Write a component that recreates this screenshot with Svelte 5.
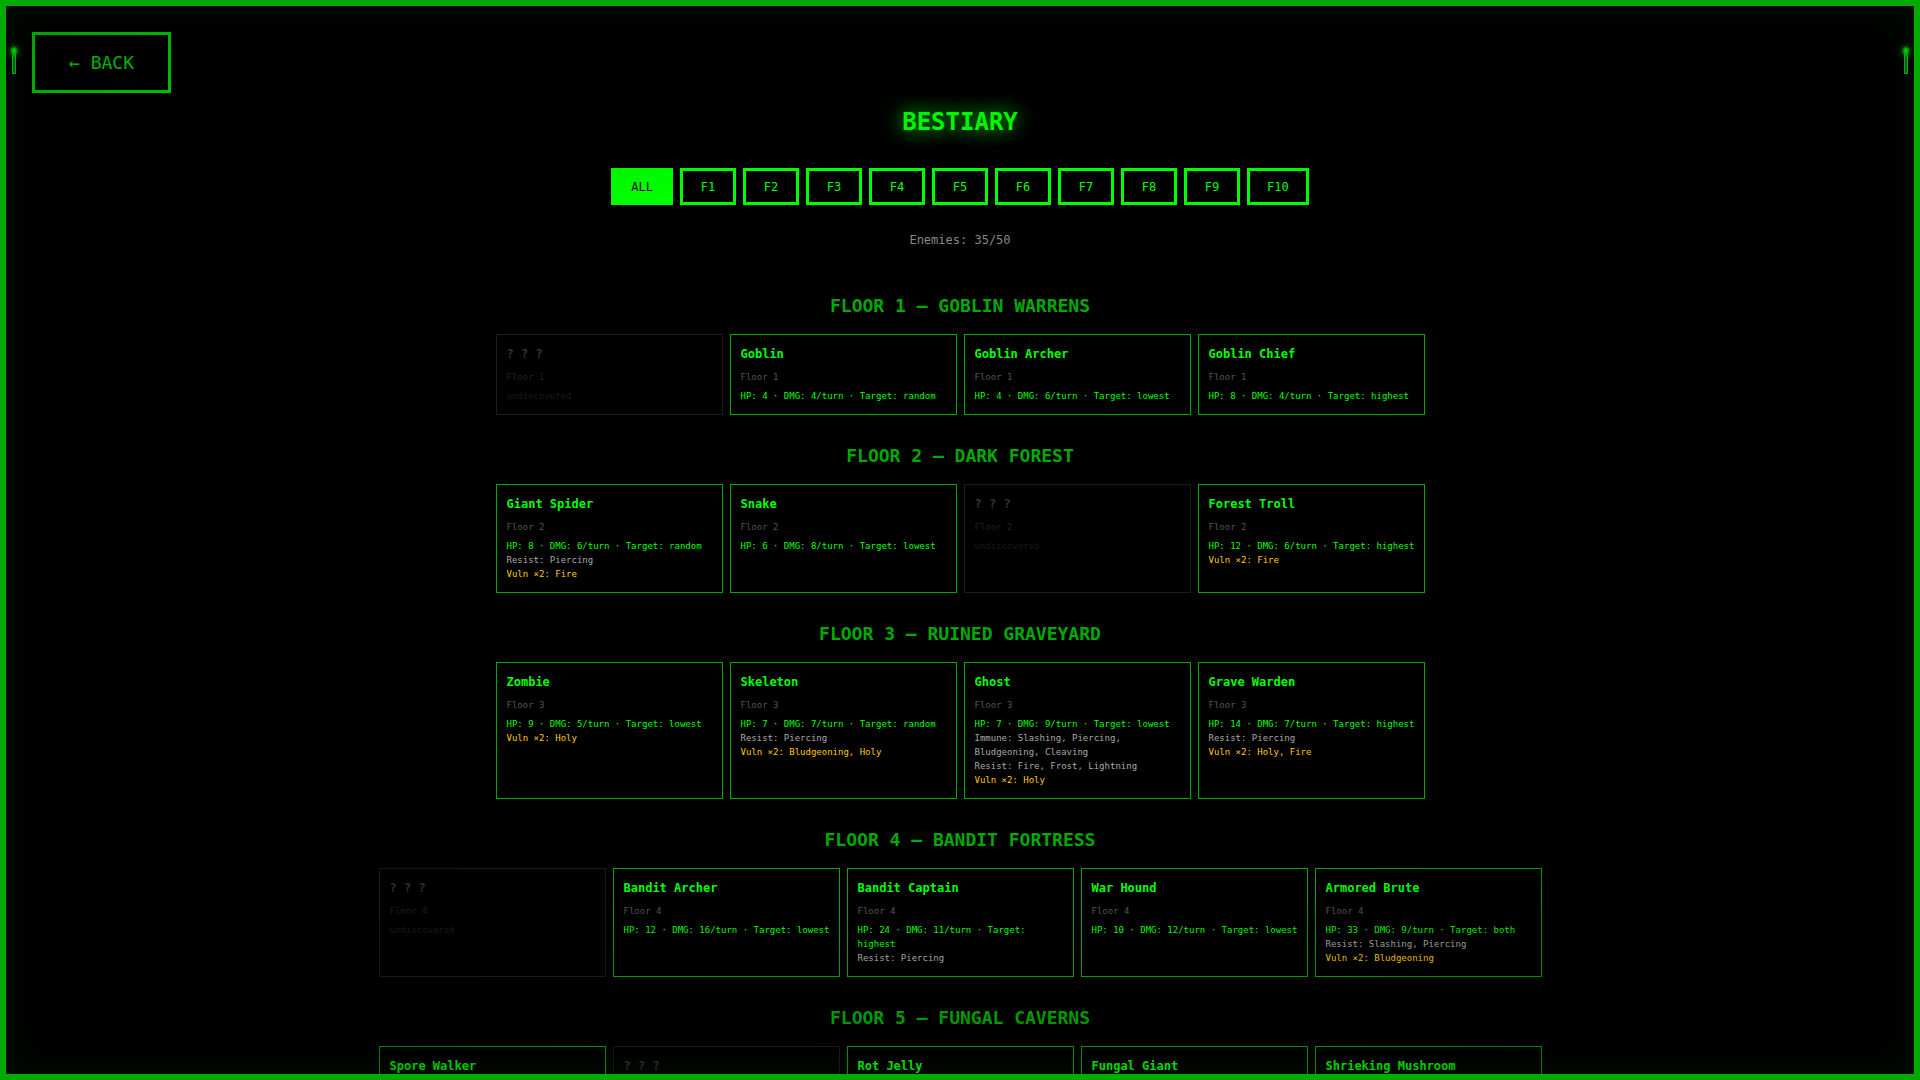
<script lang="ts">
  interface Enemy {
    name: string;
    hp: number;
    dmg: number;
    target: string;
    immune?: string[];
    resist?: string[];
    vuln?: string[];
    found: boolean;
  }

  interface Floor {
    id: number;
    name: string;
    enemies: Enemy[];
  }

  const TOTAL_FLOORS = 10;
  const TOTAL_ENEMIES = 50;
  const FOUND_ENEMIES = 35;

  const hidden: Enemy = { name: '? ? ?', hp: 0, dmg: 0, target: '', found: false };

  function enemy(name: string, hp: number, dmg: number, target: string, traits: Partial<Enemy> = {}): Enemy {
    return { name, hp, dmg, target, found: true, ...traits };
  }

  const floors: Floor[] = [
    {
      id: 1,
      name: 'Goblin Warrens',
      enemies: [
        hidden,
        enemy('Goblin', 4, 4, 'random'),
        enemy('Goblin Archer', 4, 6, 'lowest'),
        enemy('Goblin Chief', 8, 4, 'highest'),
      ],
    },
    {
      id: 2,
      name: 'Dark Forest',
      enemies: [
        enemy('Giant Spider', 8, 6, 'random', { resist: ['Piercing'], vuln: ['Fire'] }),
        enemy('Snake', 6, 8, 'lowest'),
        hidden,
        enemy('Forest Troll', 12, 6, 'highest', { vuln: ['Fire'] }),
      ],
    },
    {
      id: 3,
      name: 'Ruined Graveyard',
      enemies: [
        enemy('Zombie', 9, 5, 'lowest', { vuln: ['Holy'] }),
        enemy('Skeleton', 7, 7, 'random', { resist: ['Piercing'], vuln: ['Bludgeoning', 'Holy'] }),
        enemy('Ghost', 7, 9, 'lowest', {
          immune: ['Slashing', 'Piercing', 'Bludgeoning', 'Cleaving'],
          resist: ['Fire', 'Frost', 'Lightning'],
          vuln: ['Holy'],
        }),
        enemy('Grave Warden', 14, 7, 'highest', { resist: ['Piercing'], vuln: ['Holy', 'Fire'] }),
      ],
    },
    {
      id: 4,
      name: 'Bandit Fortress',
      enemies: [
        hidden,
        enemy('Bandit Archer', 12, 16, 'lowest'),
        enemy('Bandit Captain', 24, 11, 'highest', { resist: ['Piercing'] }),
        enemy('War Hound', 10, 12, 'lowest'),
        enemy('Armored Brute', 33, 9, 'both', { resist: ['Slashing', 'Piercing'], vuln: ['Bludgeoning'] }),
      ],
    },
    {
      id: 5,
      name: 'Fungal Caverns',
      enemies: [
        enemy('Spore Walker', 16, 10, 'random', { vuln: ['Fire'] }),
        hidden,
        enemy('Rot Jelly', 28, 8, 'lowest', { resist: ['Bludgeoning'] }),
        enemy('Fungal Giant', 40, 12, 'highest', { vuln: ['Fire'] }),
        enemy('Shrieking Mushroom', 14, 9, 'both', { vuln: ['Fire'] }),
      ],
    },
  ];

  const filters = Array.from({ length: TOTAL_FLOORS }, (_, i) => i + 1);

  // 0 shows every floor
  let selected = $state(0);

  let visibleFloors = $derived(selected === 0 ? floors : floors.filter((f) => f.id === selected));
</script>

<div class="screen">
  <main class="bestiary">
    <button class="back-btn" onclick={() => history.back()}>← BACK</button>

    <h1 class="title">BESTIARY</h1>

    <div class="filters">
      <button class="filter-btn" class:active={selected === 0} onclick={() => (selected = 0)}>ALL</button>
      {#each filters as id (id)}
        <button class="filter-btn" class:active={selected === id} onclick={() => (selected = id)}>F{id}</button>
      {/each}
    </div>

    <p class="count">Enemies: {FOUND_ENEMIES}/{TOTAL_ENEMIES}</p>

    {#each visibleFloors as floor (floor.id)}
      <section class="floor">
        <h2 class="floor-title">FLOOR {floor.id} — {floor.name.toUpperCase()}</h2>
        <div class="cards">
          {#each floor.enemies as e}
            <article class="card" class:unknown={!e.found}>
              <h3 class="card-name">{e.name}</h3>
              <p class="card-floor">Floor {floor.id}</p>
              {#if e.found}
                <p class="line stats">HP: {e.hp} · DMG: {e.dmg}/turn · Target: {e.target}</p>
                {#if e.immune}<p class="line">Immune: {e.immune.join(', ')}</p>{/if}
                {#if e.resist}<p class="line">Resist: {e.resist.join(', ')}</p>{/if}
                {#if e.vuln}<p class="line vuln">Vuln ×2: {e.vuln.join(', ')}</p>{/if}
              {:else}
                <p class="line">undiscovered</p>
              {/if}
            </article>
          {/each}
        </div>
      </section>
    {/each}
  </main>

  <!-- Screen frame and torches -->
  <div class="vignette"></div>
  <div class="frame"></div>
  <div class="torch left"></div>
  <div class="torch right"></div>
</div>

<style>
  :global(body) {
    background: #000;
    overflow: hidden;
  }

  .screen {
    position: relative;
    height: 100vh;
    overflow: hidden;
    background: #000;
    color: #0f0;
    font-family: 'DejaVu Sans Mono', monospace;
  }

  .bestiary {
    box-sizing: border-box;
    height: 100%;
    padding: 32px;
    display: flex;
    flex-direction: column;
    align-items: center;
    overflow-y: auto;
    scrollbar-width: none;
  }

  .bestiary > * {
    flex-shrink: 0;
  }

  button {
    background: transparent;
    border: 3px solid #0f0;
    color: #0f0;
    font-family: inherit;
    cursor: pointer;
  }

  .back-btn {
    align-self: flex-start;
    padding: 16px 34px;
    font-size: 18px;
    line-height: 23px;
  }

  .title {
    margin: 13px 0 30px;
    font-size: 24px;
    line-height: 32px;
    text-shadow: 0 0 20px #0f0;
  }

  .filters {
    display: flex;
    flex-wrap: wrap;
    justify-content: center;
    gap: 7px;
  }

  .filter-btn {
    min-width: 56px;
    padding: 9px 17px 8px;
    font-size: 12px;
    line-height: 14px;
  }

  .filter-btn.active {
    background: #0f0;
    color: #000;
  }

  .count {
    margin: 26px 0 16px;
    font-size: 12px;
    line-height: 18px;
    color: #888;
  }

  .floor {
    margin-top: 29px;
  }

  .floor-title {
    margin: 0 0 16px;
    font-size: 18px;
    line-height: 24px;
    text-align: center;
    color: #0a0;
  }

  .cards {
    display: flex;
    flex-wrap: wrap;
    justify-content: center;
    gap: 7px;
  }

  .card {
    box-sizing: border-box;
    width: 227px;
    padding: 11px 6px 11px 10px;
    border: 1px solid #0a0;
  }

  .card-name {
    margin: 0 0 8px;
    font-size: 12px;
    line-height: 16px;
  }

  .card-floor {
    margin: 0 0 5px;
    font-size: 9px;
    line-height: 14px;
    color: #555;
  }

  .line {
    margin: 0;
    font-size: 9px;
    line-height: 14px;
    color: #aaa;
  }

  .stats {
    color: #0f0;
  }

  .vuln {
    color: #fc0;
  }

  .card.unknown {
    border-color: #1c1c1c;
  }

  .unknown .card-name {
    color: #333;
  }

  .unknown .card-floor {
    color: #222;
  }

  .unknown .line {
    color: #1c1c1c;
  }

  .vignette,
  .frame {
    position: absolute;
    inset: 0;
    pointer-events: none;
  }

  .vignette {
    background: radial-gradient(ellipse at center, transparent 50%, rgba(0, 0, 0, 0.4) 100%);
  }

  .frame {
    border: 6px solid #0a0;
    box-shadow: inset 0 0 40px rgba(0, 255, 0, 0.06);
  }

  .torch {
    position: absolute;
    top: 54px;
    box-sizing: border-box;
    width: 4px;
    height: 20px;
    border: 1px solid #0a0;
    background: #153;
  }

  .torch.left {
    left: 12px;
  }

  .torch.right {
    right: 12px;
  }

  .torch::before {
    content: '';
    position: absolute;
    top: -8px;
    left: -2px;
    width: 6px;
    height: 8px;
    border-radius: 50%;
    background: #0c0;
    box-shadow: 0 0 8px rgba(0, 255, 0, 0.6);
    filter: blur(1px);
  }
</style>
